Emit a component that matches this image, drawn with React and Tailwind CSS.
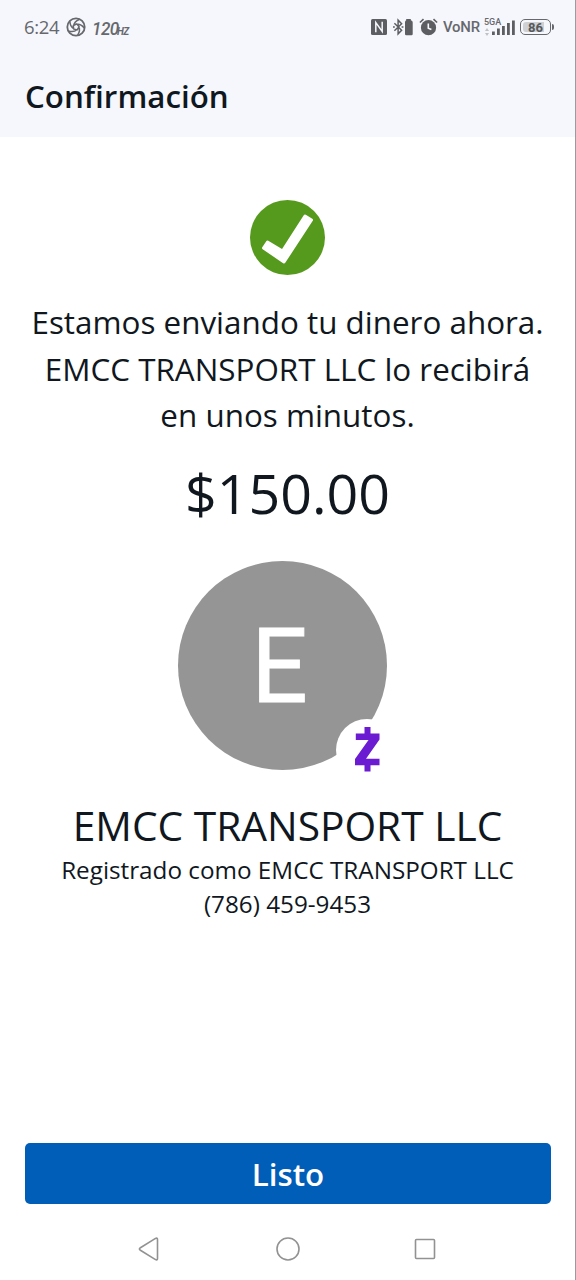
import React from "react";

function ApertureIcon() {
  return (
    <svg className="ml-[7px] h-5 w-5 shrink-0" viewBox="0 0 20 20" fill="none" stroke="#66686d" strokeWidth="1.8" strokeLinecap="round">
      <circle cx="10" cy="10" r="8.7" />
      {[0, 72, 144, 216, 288].map((a) => (
        <path key={a} d="M7.800 8.200Q8.300 4.600 13.200 2.500M7.800 8.200L10.500 7" transform={`rotate(${a} 10 10)`} strokeWidth="1.5" />
      ))}
    </svg>
  );
}

function StatusBar() {
  return (
    <div className="flex h-[54px] items-center pl-6 pr-[21px] text-[#66686d]">
      <span className="w-[35px] whitespace-nowrap text-[18.5px] leading-none tracking-[-0.3px]">6:24</span>
      <ApertureIcon />
      <span className="ml-[6px] flex items-baseline pt-[3px] font-['Roboto',sans-serif] font-medium italic leading-none">
        <span className="inline-block w-[25px] origin-left scale-x-90 text-[19px] tracking-[-0.6px]">120</span>
        <span className="text-[10px] font-bold tracking-[-0.6px]">HZ</span>
      </span>
      <div className="ml-auto flex items-center">
        <svg className="h-4 w-4" viewBox="0 0 16 16">
          <rect width="16" height="16" rx="1.5" fill="#5c5e62" />
          <path d="M4.800 13.200V3.600L11.200 12.400V2.800" fill="none" stroke="#f5f7fc" strokeWidth="1.5" />
        </svg>
        <svg className="ml-[5px] h-[18px] w-[22px]" viewBox="0 0 22 18" fill="none" stroke="#5c5e62">
          <path d="M2.4 5.2L9.6 12.2L6.1 15.8V2.2L9.6 5.8L2.4 12.8" strokeWidth="1.5" />
          <path d="M1 9h1.8M9.6 9h1.8" strokeWidth="1.6" />
          <path d="M13 4.2Q13 3 14.2 2.3V.9h4.6v1.4Q20.7 3 20.7 4.2V16q0 1.2-1.2 1.2h-5.3Q13 17.200 13 16Z" fill="#5c5e62" stroke="none" />
        </svg>
        <svg className="ml-[5px] h-[18px] w-[19px]" viewBox="0 0 19 18">
          <circle cx="9.5" cy="9.7" r="7.6" fill="#5c5e62" />
          <path d="M.9 4.5L4.5 1.200M18.1 4.5L14.5 1.200" stroke="#5c5e62" strokeWidth="1.6" fill="none" />
          <path d="M9.300 5.500V10.200L12.4 11.600" stroke="#f5f7fc" strokeWidth="1.6" fill="none" />
        </svg>
        <span className="ml-[5px] w-[37px] whitespace-nowrap pt-0.5 font-['Roboto',sans-serif] text-[15.500px] leading-none tracking-[-0.2px]"><span className="inline-block origin-left scale-x-[.96] font-medium">VoNR</span></span>
        <div className="ml-[4px] flex h-[18px] w-[31px] items-end">
          <div className="h-full w-2">
            <span className="block font-['Roboto',sans-serif] text-[9px] font-medium leading-[8px]">5GA</span>
            <svg className="mt-0.5 h-2 w-2" viewBox="0 0 8 8" fill="#bfc1c6">
              <path d="M1 3L3 0L5 3ZM1 5H5L3 8Z" />
            </svg>
          </div>
          <svg className="h-4 w-[23px]" viewBox="0 0 23 16" fill="#5c5e62">
            <rect x="0" y="11.500" width="2.800" height="3.500" />
            <rect x="5" y="8.500" width="2.800" height="6.500" />
            <rect x="10" y="6" width="2.800" height="9" />
            <rect x="15" y="3" width="2.800" height="12" />
            <rect x="20" y="0.500" width="2.800" height="14.500" />
          </svg>
        </div>
        <div className="ml-[5px] flex h-4 w-[31px] items-center justify-center rounded-[5px] border-[1.500px] border-[#66686d] p-[2px]">
          <div className="flex h-full w-full items-center justify-center rounded-[3px] bg-gradient-to-r from-[#cfd0d4] from-85% to-[#f5f7fc] to-85% font-['Roboto',sans-serif] text-[13px] font-bold leading-none text-[#56585c]">86</div>
        </div>
        <div className="ml-px h-[6px] w-[2px] rounded-r bg-[#66686d]" />
      </div>
    </div>
  );
}

function Avatar() {
  return (
    <div className="relative mt-[30px] ml-[178px] flex h-[209px] w-[209px] shrink-0 items-center justify-center rounded-full bg-[#959595]">
      <span className="mr-[5px] mt-[4px] scale-x-95 font-['Roboto',sans-serif] text-[104px] leading-none text-white [-webkit-text-stroke:1px_white]">E</span>
      <div className="absolute left-[158px] top-[158px] flex h-[62px] w-[62px] items-center justify-center rounded-full bg-white">
        <svg className="h-[45px] w-[25px]" viewBox="0 0 25 45" fill="#6b1bd1">
          <path d="M9.500 0H15.500V6.500H24.500V12.500L11 31.800H24.500V38.300H15.500V44.500H9.500V38.300H0V32L13.500 13H.8V6.500H9.500Z" />
        </svg>
      </div>
    </div>
  );
}

export default function App() {
  return (
    <div className="flex h-[1280px] w-[576px] flex-col overflow-hidden border-r border-[#9a9b9e] bg-white font-['Open_Sans','Noto_Sans',sans-serif] text-[#10171e]">
      <header className="h-[137px] shrink-0 bg-[#f5f7fc]">
        <StatusBar />
        <h1 className="mt-[20px] whitespace-nowrap pl-[25px] text-[31.300px] font-semibold leading-[44px]">Confirmación</h1>
      </header>
      <main className="flex flex-1 flex-col">
        <svg className="ml-[250px] mt-[63px] h-[75px] w-[75px] shrink-0" viewBox="0 0 75 75">
          <circle cx="37.500" cy="37.500" r="37.500" fill="#569a1d" />
          <path d="M17.500 42L32.500 51L55 16L61.500 20L34 62L13.500 48Z" fill="white" stroke="white" strokeWidth="3" strokeLinejoin="round" />
        </svg>
        <div className="mt-[24px] flex flex-col items-center whitespace-nowrap text-[31.4px] leading-[46.500px]">
          <p>Estamos enviando tu dinero ahora.</p>
          <p>EMCC TRANSPORT LLC lo recibirá</p>
          <p>en unos minutos.</p>
        </div>
        <p className="mt-[16px] text-center text-[55.500px] leading-[76px]">$150.00</p>
        <Avatar />
        <h2 className="mt-[28px] whitespace-nowrap text-center text-[40.700px] leading-[54px]">EMCC TRANSPORT LLC</h2>
        <div className="mt-px whitespace-nowrap text-center text-[24.250px] leading-[34px]">
          <p>Registrado como EMCC TRANSPORT LLC</p>
          <p>(786) 459-9453</p>
        </div>
      </main>
      <button className="ml-[25px] h-[61px] w-[526px] shrink-0 rounded-[5px] bg-[#005eb8] pt-0.5 text-[31.300px] font-semibold leading-none text-white">Listo</button>
      <nav className="flex h-[76px] shrink-0 items-center pt-[13px]">
        <svg className="ml-[138px] h-6 w-[21px]" viewBox="0 0 21 24" fill="none" stroke="#929292" strokeWidth="1.600" strokeLinejoin="round">
          <path d="M2 11Q.8 12 2 13L17.500 22.600Q19.500 23.500 19.500 21.500V2.500Q19.500.5 17.500 1.400Z" />
        </svg>
        <svg className="ml-[117px] h-6 w-6" viewBox="0 0 24 24" fill="none" stroke="#929292" strokeWidth="1.600">
          <circle cx="12" cy="12" r="11" />
        </svg>
        <svg className="ml-[114px] h-[22px] w-[22px]" viewBox="0 0 22 22" fill="none" stroke="#929292" strokeWidth="1.600">
          <rect x="1.500" y="1.500" width="19" height="19" rx="1" />
        </svg>
      </nav>
    </div>
  );
}
